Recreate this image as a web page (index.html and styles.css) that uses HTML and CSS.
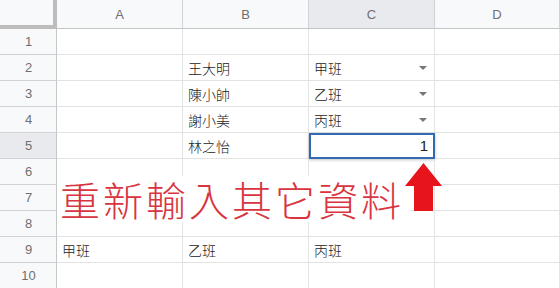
FILE: index.html
```html
<!DOCTYPE html>
<html lang="zh-Hant">
<head>
    <meta charset="UTF-8">
    <title>資料驗證</title>
    <link rel="stylesheet" href="styles.css">
</head>
<body>
    <div class="wrap">
        <div class="sheet">
            <div class="corner"></div>
            <div class="colhead">A</div>
            <div class="colhead">B</div>
            <div class="colhead active">C</div>
            <div class="colhead">D</div>

            <div class="rowhead">1</div><div class="cell"></div><div class="cell"></div><div class="cell"></div><div class="cell"></div>
            <div class="rowhead">2</div><div class="cell"></div><div class="cell">王大明</div><div class="cell drop">甲班<span class="caret"></span></div><div class="cell"></div>
            <div class="rowhead">3</div><div class="cell"></div><div class="cell">陳小帥</div><div class="cell drop">乙班<span class="caret"></span></div><div class="cell"></div>
            <div class="rowhead">4</div><div class="cell"></div><div class="cell">謝小美</div><div class="cell drop">丙班<span class="caret"></span></div><div class="cell"></div>
            <div class="rowhead active">5</div><div class="cell"></div><div class="cell">林之怡</div><div class="cell num selected">1</div><div class="cell"></div>
            <div class="rowhead">6</div><div class="cell"></div><div class="cell"></div><div class="cell"></div><div class="cell"></div>
            <div class="rowhead">7</div><div class="cell"></div><div class="cell"></div><div class="cell"></div><div class="cell"></div>
            <div class="rowhead">8</div><div class="cell"></div><div class="cell"></div><div class="cell"></div><div class="cell"></div>
            <div class="rowhead">9</div><div class="cell">甲班</div><div class="cell">乙班</div><div class="cell">丙班</div><div class="cell"></div>
            <div class="rowhead">10</div><div class="cell"></div><div class="cell"></div><div class="cell"></div><div class="cell"></div>
        </div>

        <div class="note">重新輸入其它資料</div>
        <svg class="arrow" width="38" height="50" viewBox="0 0 38 50">
            <polygon points="18.5,0 37,23 28,23 28,48 9,48 9,23 0,23" fill="#e8141c"/>
        </svg>
    </div>
</body>
</html>
```

FILE: styles.css
```css
* {
    margin: 0;
    padding: 0;
    box-sizing: border-box;
}

body {
    background: #fff;
    overflow: hidden;
    font-family: 'Liberation Sans', 'Noto Sans CJK TC', sans-serif;
}

.wrap {
    position: relative;
    width: 560px;
    height: 288px;
}

.sheet {
    display: grid;
    grid-template-columns: 57px 126px 126px 126px 1fr;
    grid-template-rows: 29px;
    grid-auto-rows: 26px;
}

.corner {
    background: #f8f9fa;
    border-right: 4px solid #bdbdbd;
    border-bottom: 4px solid #bdbdbd;
}

.colhead {
    background: #f8f9fa;
    border-right: 1px solid #d0d3d6;
    border-bottom: 1px solid #c4c7c5;
    color: #707070;
    font-size: 13px;
    display: flex;
    align-items: center;
    justify-content: center;
}

.rowhead {
    background: #f8f9fa;
    border-right: 1px solid #c4c7c5;
    border-bottom: 1px solid #d0d3d6;
    color: #707070;
    font-size: 13px;
    display: flex;
    align-items: center;
    justify-content: center;
    padding-left: 1px;
}

.colhead.active,
.rowhead.active {
    background: #e8eaed;
}

.cell {
    border-right: 1px solid #e2e3e3;
    border-bottom: 1px solid #e2e3e3;
    color: #222;
    font-family: 'Noto Sans CJK TC', sans-serif;
    font-size: 14px;
    font-weight: 300;
    display: flex;
    align-items: center;
    padding: 0 5px;
    white-space: nowrap;
}

.drop {
    justify-content: space-between;
    padding-right: 7px;
}

.caret {
    width: 0;
    height: 0;
    border-left: 4px solid transparent;
    border-right: 4px solid transparent;
    border-top: 4px solid #777;
}

.num {
    justify-content: flex-end;
    font-family: 'Liberation Sans', sans-serif;
    font-weight: normal;
    font-size: 15px;
}

.selected {
    outline: 2px solid #3169b5;
    outline-offset: -2px;
    box-shadow: 0 1px 3px rgba(60, 64, 67, 0.3);
    padding-right: 6px;
}

.note {
    position: absolute;
    left: 57px;
    top: 176px;
    height: 46px;
    padding: 0 6px 0 3px;
    background: #fff;
    color: #d83540;
    font-family: 'Noto Sans CJK TC', sans-serif;
    font-size: 40px;
    font-weight: 300;
    letter-spacing: 3px;
    line-height: 46px;
    white-space: nowrap;
}

.arrow {
    position: absolute;
    left: 405px;
    top: 163px;
}
```
